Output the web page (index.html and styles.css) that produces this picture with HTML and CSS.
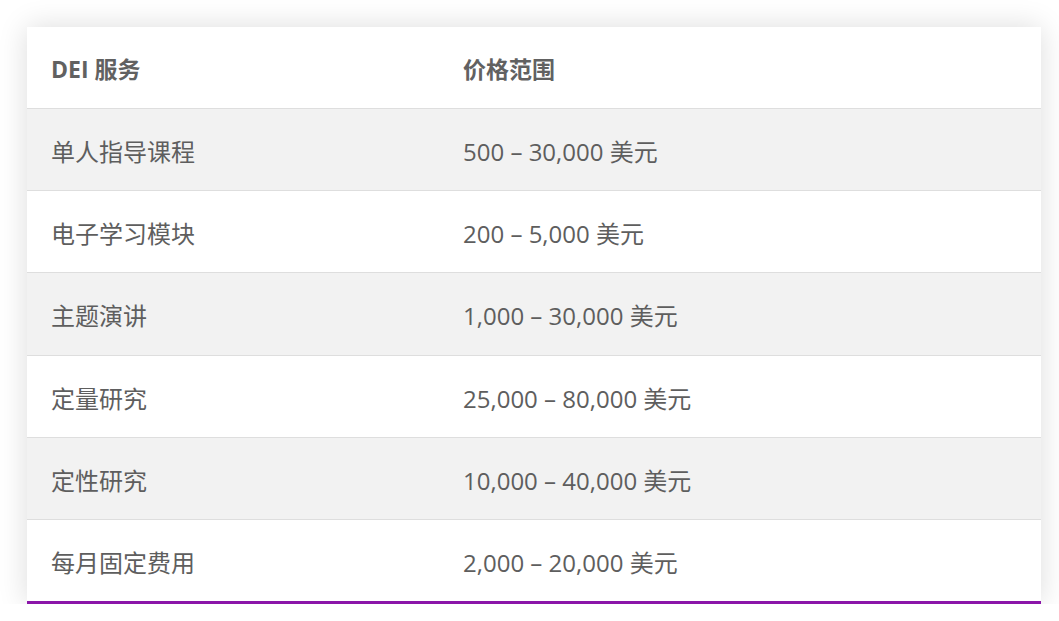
FILE: index.html
```html
<!DOCTYPE html>
<html lang="zh">
<head>
<meta charset="utf-8">
<link rel="stylesheet" href="styles.css">
</head>
<body>
<div class="wrap">
<table class="price-table">
  <thead>
    <tr><th class="col-a">DEI 服务</th><th>价格范围</th></tr>
  </thead>
  <tbody>
    <tr><td>单人指导课程</td><td>500 – 30,000 美元</td></tr>
    <tr><td>电子学习模块</td><td>200 – 5,000 美元</td></tr>
    <tr><td>主题演讲</td><td>1,000 – 30,000 美元</td></tr>
    <tr><td>定量研究</td><td>25,000 – 80,000 美元</td></tr>
    <tr><td>定性研究</td><td>10,000 – 40,000 美元</td></tr>
    <tr><td>每月固定费用</td><td>2,000 – 20,000 美元</td></tr>
  </tbody>
</table>
</div>
</body>
</html>
```
FILE: styles.css
```css
html, body {
  margin: 0;
  padding: 0;
  background: #ffffff;
}
.wrap {
  padding: 27px 18px 0 27px;
}
.price-table {
  width: 1014px;
  border-collapse: collapse;
  background: #ffffff;
  box-shadow: 0 0 28px rgba(0, 0, 0, 0.14);
  border-bottom: 3px solid #8b16a9;
  font-family: "Open Sans", "Noto Sans CJK SC", sans-serif;
  font-size: 24px;
  color: #5e5e5e;
}
.price-table th,
.price-table td {
  text-align: left;
  padding: 28px 24px 23px 24px;
  line-height: 30.2px;
  border-bottom: 1px solid #dedede;
}
.price-table th {
  font-weight: 700;
  font-size: 23px;
  color: #616161;
  padding: 27px 24px 24px 24px;
  line-height: 30px;
}
.price-table .col-a {
  width: 364px;
}
.price-table tbody tr:nth-child(odd) {
  background: #f2f2f2;
}
.price-table tbody tr:last-child td {
  border-bottom: none;
}
```
